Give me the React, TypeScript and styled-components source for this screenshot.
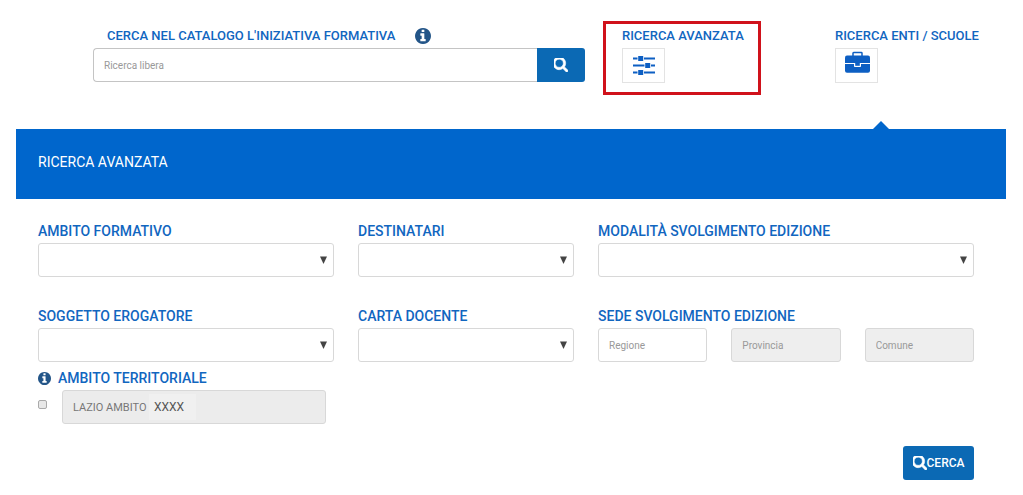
import React from "react";
import styled, { createGlobalStyle, css } from "styled-components";

const blue = "#1166bf";
const button = "#0b69b4";
const panel = "#0066cc";

const GlobalStyle = createGlobalStyle`
  * { box-sizing: border-box; }
  body {
    margin: 0;
    background: #fff;
    font-family: Roboto, "Liberation Sans", sans-serif;
  }
  button, input, select { font-family: inherit; }
`;

const Page = styled.div`
  padding: 21px 17px 15px 16px;
`;

const labelText = css`
  font-size: 14px;
  line-height: 20px;
  font-weight: 500;
  color: ${blue};
  white-space: nowrap;
`;

const Label = styled.label`
  ${labelText}
`;

const Caption = styled.span`
  ${labelText}
`;

const Header = styled.header`
  display: flex;
  align-items: flex-start;
  padding: 0 19px 0 77px;
  margin-bottom: 34px;
  ${Label}, ${Caption} { font-size: 13px; }
`;

const Group = styled.div`
  display: flex;
  flex-direction: column;
  gap: 2px;
  min-width: 0;
`;

const SearchGroup = styled(Group).attrs({ as: "form" })`
  flex: 1;
  padding-top: 5px;
`;

const AdvancedGroup = styled(Group)`
  width: 158px;
  margin-left: 18px;
  padding: 2px 0 9px 16px;
  border: 3px solid #d0121b;
`;

const SchoolsGroup = styled(Group)`
  width: 152px;
  margin-left: 74px;
  padding-top: 5px;
`;

const LabelLine = styled.div<{ $indent?: boolean; $gap: number }>`
  display: flex;
  align-items: center;
  gap: ${(p) => p.$gap}px;
  padding-left: ${(p) => (p.$indent ? 14 : 0)}px;
`;

const fieldBox = css`
  width: 100%;
  min-width: 0;
  height: 34px;
  border: 1px solid #d8d8d8;
  border-radius: 3px;
  background: #fff;
  color: #666;
  font-size: 10px;
`;

const TextField = styled.input`
  ${fieldBox}
  padding: 0 10px;
  &::placeholder { color: #999; opacity: 1; }
  &:disabled { background: #eee; }
`;

const SearchRow = styled.div`
  display: flex;
`;

const SearchField = styled(TextField)`
  flex: 1;
  border-color: #c4c4c4;
  border-right: 0;
  border-radius: 4px 0 0 4px;
`;

const SearchButton = styled.button`
  display: flex;
  align-items: center;
  justify-content: center;
  width: 48px;
  height: 34px;
  padding: 0;
  border: 0;
  border-radius: 0 3px 3px 0;
  background: ${button};
  color: #fff;
`;

const IconButton = styled.button`
  display: flex;
  align-items: center;
  justify-content: center;
  width: 43px;
  height: 35px;
  padding: 0;
  border: 1px solid #e3e3e3;
  background: #fff;
  color: #0d5fc3;
`;

const Banner = styled.div`
  position: relative;
  height: 70px;
  padding: 22px;
  background: ${panel};
  &::before {
    content: "";
    position: absolute;
    right: 117px;
    bottom: 100%;
    border: 8px solid transparent;
    border-top: 0;
    border-bottom-color: ${panel};
  }
`;

const Title = styled.h1`
  margin: 0;
  font-size: 14px;
  line-height: 22px;
  font-weight: 400;
  color: #fff;
`;

const Form = styled.form`
  padding: 22px 32px 0 22px;
`;

const Grid = styled.div`
  display: grid;
  grid-template-columns: 296fr 216fr 376fr;
  gap: 29px 24px;
  margin-bottom: 6px;
`;

const Places = styled.div`
  display: grid;
  grid-template-columns: repeat(3, 1fr);
  gap: 24px;
`;

const SelectWrap = styled.div`
  position: relative;
`;

const Select = styled.select`
  ${fieldBox}
  display: block;
  appearance: none;
  padding: 0 24px 0 10px;
`;

const Arrow = styled.svg`
  position: absolute;
  right: 7px;
  top: 13px;
  pointer-events: none;
`;

const TerritoryRow = styled.div`
  display: flex;
  align-items: flex-start;
  gap: 15px;
`;

const Check = styled.input`
  appearance: none;
  width: 9px;
  height: 9px;
  margin: 10px 0 0;
  border: 1px solid #aaa;
  border-radius: 2px;
  background: #e8e8e8;
  &:checked { background: ${button}; }
`;

const Territory = styled.div`
  display: flex;
  align-items: center;
  width: 264px;
  height: 34px;
  padding-left: 10px;
  border: 1px solid #d8d8d8;
  border-radius: 3px;
  background: #ececec;
`;

const TerritoryName = styled.input`
  width: 76px;
  padding: 0;
  border: 0;
  background: transparent;
  color: #777;
  font-size: 11px;
`;

const TerritoryCode = styled.output`
  padding: 0 12px 0 5px;
  background: #f0f0f0;
  color: #555;
  font-size: 12px;
  line-height: 26px;
`;

const Actions = styled.div`
  display: flex;
  justify-content: flex-end;
  margin-top: 22px;
`;

const SubmitButton = styled.button`
  display: flex;
  align-items: center;
  justify-content: center;
  width: 71px;
  height: 34px;
  padding: 0;
  border: 0;
  border-radius: 3px;
  background: ${button};
  color: #fff;
  font-size: 12px;
  font-weight: 500;
`;

function SearchIcon({ size }: { size: number }) {
  return (
    <svg width={size} height={size} viewBox="128 128 1536 1536" fill="currentColor" aria-hidden="true">
      <path d="M1152 704q0-185-131.5-316.5t-316.5-131.5-316.5 131.5-131.5 316.5 131.5 316.5 316.5 131.5 316.5-131.5 131.5-316.5zm512 832q0 52-38 90t-90 38q-54 0-90-38l-343-342q-179 124-399 124-143 0-273.5-55.5t-225-150-150-225-55.5-273.5 55.5-273.5 150-225 225-150 273.5-55.5 273.5 55.5 225 150 150 225 55.5 273.5q0 220-124 399l343 343q37 37 37 90z" stroke="currentColor" strokeWidth="60" />
    </svg>
  );
}

function InfoIcon({ size }: { size: number }) {
  return (
    <svg width={size} height={size} viewBox="128 128 1536 1536" fill="#235588" aria-hidden="true">
      <path d="M1152 1376v-160q0-14-9-23t-23-9h-96v-512q0-14-9-23t-23-9h-320q-14 0-23 9t-9 23v160q0 14 9 23t23 9h96v320h-96q-14 0-23 9t-9 23v160q0 14 9 23t23 9h448q14 0 23-9t9-23zm-128-896v-160q0-14-9-23t-23-9h-192q-14 0-23 9t-9 23v160q0 14 9 23t23 9h192q14 0 23-9t9-23zm640 416q0 209-103 385.5t-279.5 279.5-385.5 103-385.5-103-279.5-279.5-103-385.5 103-385.5 279.5-279.5 385.5-103 385.5 103 279.5 279.5 103 385.5z" />
    </svg>
  );
}

function SlidersIcon() {
  return (
    <svg width="22" height="21" viewBox="0 0 22 21" fill="currentColor" aria-hidden="true">
      <path d="M0 2.500h22v2H0zM0 9.500h22v2H0zM0 16.500h22v2H0z" />
      <path fill="#fff" d="M4.500 1h6.500v5H4.500zM11.500 8h6.500v5h-6.500zM4.500 15h6.500v5H4.500z" />
      <path d="M5.200 1h5v5H5.200zM12.200 8h5v5h-5zM5.200 15h5v5H5.200z" />
    </svg>
  );
}

function BriefcaseIcon() {
  return (
    <svg width="27" height="29" viewBox="-2 0 27 29" aria-hidden="true">
      <path fill="none" stroke="currentColor" strokeWidth="1.500" d="M8 5V2.200q0-.7.7-.7h7.600q.7 0 .7.700V5" />
      <rect y="4.500" width="25" height="17.300" rx="2" fill="currentColor" />
      <path fill="#fff" d="M0 12h25v1H0zM9 12.500h7v2.700q0 .8-.8.800H9.800q-.8 0-.8-.8z" />
      <path fill="currentColor" d="M10.200 12h4.600v2.800h-4.600z" />
    </svg>
  );
}

function SelectField({ id, label }: { id: string; label: string }) {
  return (
    <Group>
      <Label htmlFor={id}>{label}</Label>
      <SelectWrap>
        <Select id={id} defaultValue="">
          <option value="" />
        </Select>
        <Arrow width="7" height="8" viewBox="0 0 7 8" aria-hidden="true">
          <path d="M0 .5h7L3.500 8z" fill="#444" />
        </Arrow>
      </SelectWrap>
    </Group>
  );
}

export default function App() {
  return (
    <Page>
      <GlobalStyle />
      <Header>
        <SearchGroup>
          <LabelLine $indent $gap={20}>
            <Label htmlFor="catalogo">CERCA NEL CATALOGO L'INIZIATIVA FORMATIVA</Label>
            <InfoIcon size={16} />
          </LabelLine>
          <SearchRow>
            <SearchField id="catalogo" type="text" placeholder="Ricerca libera" />
            <SearchButton type="button" aria-label="Cerca">
              <SearchIcon size={14} />
            </SearchButton>
          </SearchRow>
        </SearchGroup>
        <AdvancedGroup>
          <Caption id="avanzata">RICERCA AVANZATA</Caption>
          <IconButton type="button" aria-labelledby="avanzata">
            <SlidersIcon />
          </IconButton>
        </AdvancedGroup>
        <SchoolsGroup>
          <Caption id="enti">RICERCA ENTI / SCUOLE</Caption>
          <IconButton type="button" aria-labelledby="enti">
            <BriefcaseIcon />
          </IconButton>
        </SchoolsGroup>
      </Header>
      <Banner>
        <Title>RICERCA AVANZATA</Title>
      </Banner>
      <Form>
        <Grid>
          <SelectField id="ambito" label="AMBITO FORMATIVO" />
          <SelectField id="destinatari" label="DESTINATARI" />
          <SelectField id="modalita" label="MODALITÀ SVOLGIMENTO EDIZIONE" />
          <SelectField id="soggetto" label="SOGGETTO EROGATORE" />
          <SelectField id="carta" label="CARTA DOCENTE" />
          <Group>
            <Label htmlFor="regione">SEDE SVOLGIMENTO EDIZIONE</Label>
            <Places>
              <TextField id="regione" type="text" placeholder="Regione" />
              <TextField type="text" placeholder="Provincia" aria-label="Provincia" disabled />
              <TextField type="text" placeholder="Comune" aria-label="Comune" disabled />
            </Places>
          </Group>
        </Grid>
        <Group>
          <LabelLine $gap={7}>
            <InfoIcon size={13} />
            <Label htmlFor="territoriale">AMBITO TERRITORIALE</Label>
          </LabelLine>
          <TerritoryRow>
            <Check id="territoriale" type="checkbox" />
            <Territory>
              <TerritoryName type="text" value="LAZIO AMBITO" aria-label="Ambito" readOnly />
              <TerritoryCode>XXXX</TerritoryCode>
            </Territory>
          </TerritoryRow>
        </Group>
        <Actions>
          <SubmitButton type="submit">
            <SearchIcon size={14} />
            CERCA
          </SubmitButton>
        </Actions>
      </Form>
    </Page>
  );
}
